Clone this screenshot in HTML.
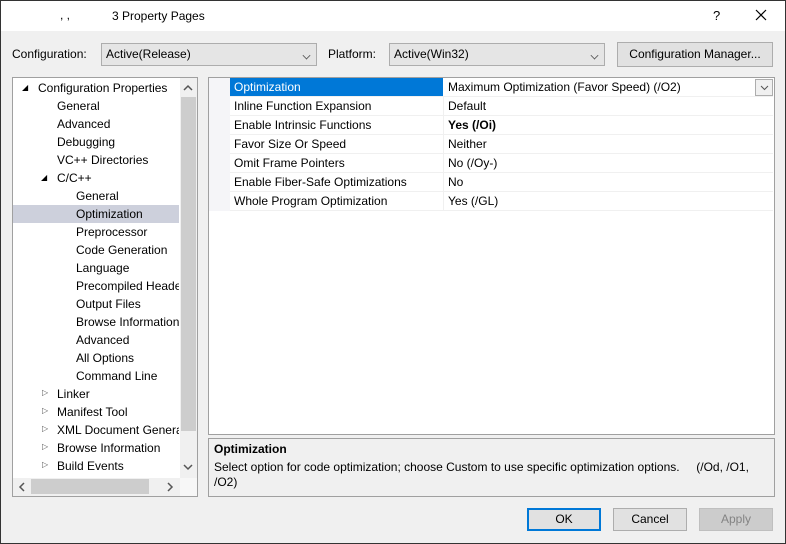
<!DOCTYPE html>
<html><head><style>
*{box-sizing:border-box;margin:0;padding:0}
body{width:786px;height:544px;overflow:hidden;font-family:"Liberation Sans",sans-serif;font-size:12px;color:#000;background:#f0f0f0;position:relative}
.a{position:absolute;white-space:nowrap}
.combo{position:absolute;background:#e5e5e5;border:1px solid #adadad;height:23px;line-height:21px;padding-left:4px}
.chev{position:absolute;right:6px;top:8px;width:7px;height:7px;border-right:1px solid #555;border-bottom:1px solid #555;transform:rotate(45deg) scale(.8)}
.btn{position:absolute;background:#e1e1e1;border:1px solid #adadad;text-align:center;line-height:21px;height:23px}
.ti{position:absolute;height:18px;line-height:18px;white-space:nowrap}
.tri{position:absolute;font-size:8px}
.row{position:absolute;left:230px;width:543px;height:19px;border-bottom:1px solid #f0f0f0;line-height:18px}
.row span{position:absolute;left:4px}
.row b,.row i{position:absolute;left:218px;font-style:normal;font-weight:normal}
.row .sep{position:absolute;left:213px;top:0;width:1px;height:19px;background:#f0f0f0}
</style></head><body>
<div class="a" style="left:0;top:0;width:786px;height:544px;border:1px solid #333"></div>
<div class="a" style="left:1px;top:1px;width:784px;height:30px;background:#fff"></div>
<div class="a" style="left:60px;top:8px;font-size:12px">, ,</div>
<div class="a" style="left:112px;top:9px;font-size:12px">3 Property Pages</div>
<div class="a" style="left:713px;top:8px;font-size:13px">?</div>
<svg class="a" style="left:755px;top:9px" width="12" height="12"><path d="M1 1L11 11M11 1L1 11" stroke="#000" stroke-width="1.2"/></svg>

<div class="a" style="left:12px;top:47px">Configuration:</div>
<div class="combo" style="left:101px;top:43px;width:216px">Active(Release)<div class="chev"></div></div>
<div class="a" style="left:328px;top:47px">Platform:</div>
<div class="combo" style="left:389px;top:43px;width:216px">Active(Win32)<div class="chev"></div></div>
<div class="btn" style="left:617px;top:42px;width:156px;height:25px;line-height:23px">Configuration Manager...</div>

<!-- tree -->
<div class="a" style="left:12px;top:77px;width:186px;height:420px;border:1px solid #a0a0a0;background:#f7f7f7"></div>
<div class="a" style="left:13px;top:78px;width:167px;height:400px;background:#fff"></div>
<div class="a" style="left:13px;top:205px;width:166px;height:18px;background:#cdd0dc"></div>
<div class="tri a" style="left:22px;top:83px">◢</div>
<div class="ti" style="left:38px;top:79px">Configuration Properties</div>
<div class="ti" style="left:57px;top:97px">General</div>
<div class="ti" style="left:57px;top:115px">Advanced</div>
<div class="ti" style="left:57px;top:133px">Debugging</div>
<div class="ti" style="left:57px;top:151px">VC++ Directories</div>
<div class="tri a" style="left:41px;top:173px">◢</div>
<div class="ti" style="left:57px;top:169px">C/C++</div>
<div class="ti" style="left:76px;top:187px">General</div>
<div class="ti" style="left:76px;top:205px">Optimization</div>
<div class="ti" style="left:76px;top:223px">Preprocessor</div>
<div class="ti" style="left:76px;top:241px">Code Generation</div>
<div class="ti" style="left:76px;top:259px">Language</div>
<div class="ti" style="left:76px;top:277px;width:103px;overflow:hidden">Precompiled Headers</div>
<div class="ti" style="left:76px;top:295px">Output Files</div>
<div class="ti" style="left:76px;top:313px;width:103px;overflow:hidden">Browse Information</div>
<div class="ti" style="left:76px;top:331px">Advanced</div>
<div class="ti" style="left:76px;top:349px">All Options</div>
<div class="ti" style="left:76px;top:367px">Command Line</div>
<div class="tri a" style="left:42px;top:388px;color:#555">▷</div><div class="ti" style="left:57px;top:385px">Linker</div>
<div class="tri a" style="left:42px;top:406px;color:#555">▷</div><div class="ti" style="left:57px;top:403px">Manifest Tool</div>
<div class="tri a" style="left:42px;top:424px;color:#555">▷</div><div class="ti" style="left:57px;top:421px;width:122px;overflow:hidden">XML Document Generator</div>
<div class="tri a" style="left:42px;top:442px;color:#555">▷</div><div class="ti" style="left:57px;top:439px">Browse Information</div>
<div class="tri a" style="left:42px;top:460px;color:#555">▷</div><div class="ti" style="left:57px;top:457px">Build Events</div>
<div class="a" style="left:180px;top:78px;width:17px;height:400px;background:#f0f0f0"></div>
<div class="a" style="left:181px;top:97px;width:15px;height:334px;background:#cdcdcd"></div>
<svg class="a" style="left:183px;top:84px" width="10" height="8"><path d="M1 6L5 2L9 6" stroke="#555" stroke-width="1.5" fill="none"/></svg>
<svg class="a" style="left:183px;top:463px" width="10" height="8"><path d="M1 2L5 6L9 2" stroke="#555" stroke-width="1.5" fill="none"/></svg>
<div class="a" style="left:13px;top:478px;width:167px;height:18px;background:#f0f0f0"></div>
<div class="a" style="left:31px;top:479px;width:118px;height:15px;background:#cdcdcd"></div>
<svg class="a" style="left:18px;top:482px" width="8" height="10"><path d="M6 1L2 5L6 9" stroke="#555" stroke-width="1.5" fill="none"/></svg>
<svg class="a" style="left:166px;top:482px" width="8" height="10"><path d="M2 1L6 5L2 9" stroke="#555" stroke-width="1.5" fill="none"/></svg>

<!-- grid -->
<div class="a" style="left:208px;top:77px;width:567px;height:358px;border:1px solid #a0a0a0;background:#fff"></div>
<div class="a" style="left:209px;top:78px;width:21px;height:133px;background:#f5f5f8"></div>
<div class="row" style="top:78px"><div class="a" style="left:0;top:0;width:213px;height:18px;background:#0078d7"></div><span style="color:#fff">Optimization</span><i>Maximum Optimization (Favor Speed) (/O2)</i>
<div class="a" style="left:525px;top:1px;width:18px;height:17px;border:1px solid #adadad;background:#f0f0f0"></div><svg class="a" style="left:530px;top:7px" width="9" height="6"><path d="M1 1L4.5 4.5L8 1" stroke="#555" fill="none"/></svg></div>
<div class="row" style="top:97px"><span>Inline Function Expansion</span><div class="sep"></div><i>Default</i></div>
<div class="row" style="top:116px"><span>Enable Intrinsic Functions</span><div class="sep"></div><b style="font-weight:bold">Yes (/Oi)</b></div>
<div class="row" style="top:135px"><span>Favor Size Or Speed</span><div class="sep"></div><i>Neither</i></div>
<div class="row" style="top:154px"><span>Omit Frame Pointers</span><div class="sep"></div><i>No (/Oy-)</i></div>
<div class="row" style="top:173px"><span>Enable Fiber-Safe Optimizations</span><div class="sep"></div><i>No</i></div>
<div class="row" style="top:192px"><span>Whole Program Optimization</span><div class="sep"></div><i>Yes (/GL)</i></div>

<!-- description -->
<div class="a" style="left:208px;top:438px;width:567px;height:59px;border:1px solid #a0a0a0"></div>
<div class="a" style="left:214px;top:442px;font-weight:bold">Optimization</div>
<div class="a" style="left:214px;top:460px">Select option for code optimization; choose Custom to use specific optimization options. &nbsp;&nbsp;&nbsp;&nbsp;(/Od, /O1,</div>
<div class="a" style="left:214px;top:475px">/O2)</div>

<div class="btn" style="left:527px;top:508px;width:74px;border:2px solid #0078d7;line-height:19px">OK</div>
<div class="btn" style="left:613px;top:508px;width:74px">Cancel</div>
<div class="btn" style="left:699px;top:508px;width:74px;background:#ccc;border-color:#bfbfbf;color:#838383">Apply</div>
</body></html>
